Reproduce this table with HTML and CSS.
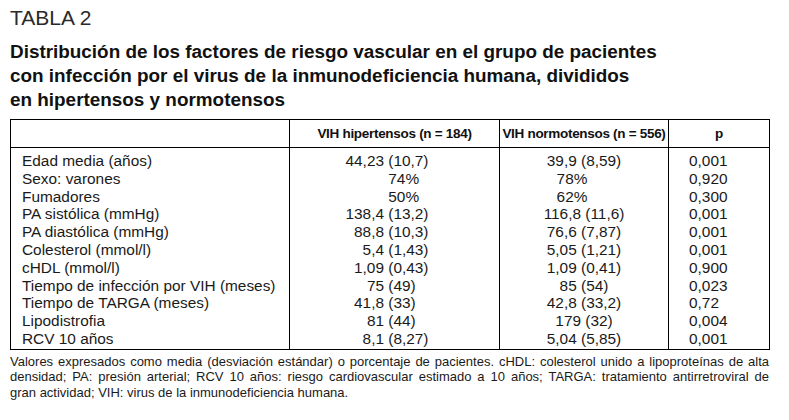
FILE: index.html
```html
<!DOCTYPE html>
<html lang="es">
<head>
<meta charset="utf-8">
<title>Tabla 2</title>
<link rel="stylesheet" href="styles.css">
</head>
<body>
<div class="page">
  <div class="label">TABLA 2</div>
  <h1 class="title">Distribución de los factores de riesgo vascular en el grupo de pacientes<br>con infección por el virus de la inmunodeficiencia humana, divididos<br>en hipertensos y normotensos</h1>
  <table class="data">
    <colgroup>
      <col class="c1"><col class="c2"><col class="c3"><col class="c4">
    </colgroup>
    <thead>
      <tr><th></th><th>VIH hipertensos (n = 184)</th><th>VIH normotensos (n = 556)</th><th>p</th></tr>
    </thead>
    <tbody>
      <tr class="first"><td class="name">Edad media (años)</td><td class="hip"><span class="m">44,23</span> <span class="s">(10,7)</span></td><td class="nor">39,9 (8,59)</td><td class="p">0,001</td></tr>
      <tr><td class="name">Sexo: varones</td><td class="hip"><span class="m"></span> <span class="s">74%</span></td><td class="nor pct">78%</td><td class="p">0,920</td></tr>
      <tr><td class="name">Fumadores</td><td class="hip"><span class="m"></span> <span class="s">50%</span></td><td class="nor pct">62%</td><td class="p">0,300</td></tr>
      <tr><td class="name">PA sistólica (mmHg)</td><td class="hip"><span class="m">138,4</span> <span class="s">(13,2)</span></td><td class="nor">116,8 (11,6)</td><td class="p">0,001</td></tr>
      <tr><td class="name">PA diastólica (mmHg)</td><td class="hip"><span class="m">88,8</span> <span class="s">(10,3)</span></td><td class="nor">76,6 (7,87)</td><td class="p">0,001</td></tr>
      <tr><td class="name">Colesterol (mmol/l)</td><td class="hip"><span class="m">5,4</span> <span class="s">(1,43)</span></td><td class="nor">5,05 (1,21)</td><td class="p">0,001</td></tr>
      <tr><td class="name">cHDL (mmol/l)</td><td class="hip"><span class="m">1,09</span> <span class="s">(0,43)</span></td><td class="nor">1,09 (0,41)</td><td class="p">0,900</td></tr>
      <tr><td class="name">Tiempo de infección por VIH (meses)</td><td class="hip"><span class="m">75</span> <span class="s">(49)</span></td><td class="nor">85 (54)</td><td class="p">0,023</td></tr>
      <tr><td class="name">Tiempo de TARGA (meses)</td><td class="hip"><span class="m">41,8</span> <span class="s">(33)</span></td><td class="nor">42,8 (33,2)</td><td class="p">0,72</td></tr>
      <tr><td class="name">Lipodistrofia</td><td class="hip"><span class="m">81</span> <span class="s">(44)</span></td><td class="nor">179 (32)</td><td class="p">0,004</td></tr>
      <tr class="last"><td class="name">RCV 10 años</td><td class="hip"><span class="m">8,1</span> <span class="s">(8,27)</span></td><td class="nor">5,04 (5,85)</td><td class="p">0,001</td></tr>
    </tbody>
  </table>
  <p class="note">
    <span class="ln">Valores expresados como media (desviación estándar) o porcentaje de pacientes. cHDL: colesterol unido a lipoproteínas de alta</span>
    <span class="ln">densidad; PA: presión arterial; RCV 10 años: riesgo cardiovascular estimado a 10 años; TARGA: tratamiento antirretroviral de</span>
    <span class="ln end">gran actividad; VIH: virus de la inmunodeficiencia humana.</span>
  </p>
</div>
</body>
</html>
```

FILE: styles.css
```css
html, body {
  margin: 0;
  padding: 0;
  background: #fff;
}

body {
  font-family: "Liberation Sans", Arial, sans-serif;
  color: #1a1a1a;
}

.page {
  padding: 5px 0 0 10px;
  width: 760px;
}

.label {
  font-size: 21px;
  line-height: 25px;
  font-weight: normal;
  color: #2a2a2a;
}

.title {
  margin: 10px 0 0 0;
  font-size: 18.9px;
  line-height: 24px;
  font-weight: bold;
  color: #111;
}

.data {
  margin-top: 7px;
  border-collapse: collapse;
  table-layout: fixed;
  width: 759px;
  border: 1px solid #000;
}

.c1 { width: 279px; }
.c2 { width: 210px; }
.c3 { width: 169px; }
.c4 { width: 101px; }

.data th {
  height: 27px;
  padding: 0;
  font-size: 13.5px;
  letter-spacing: -0.3px;
  font-weight: bold;
  text-align: center;
  white-space: nowrap;
  border-bottom: 1px solid #000;
  border-left: 1px solid #000;
  color: #111;
}

.data th:first-child {
  border-left: none;
}

.data td {
  padding: 0;
  font-size: 15.4px;
  line-height: 17.8px;
  white-space: nowrap;
  border-left: 1px solid #000;
  color: #1a1a1a;
}

.data td.name {
  border-left: none;
  padding-left: 11px;
}

.data tr.first td {
  padding-top: 4px;
}

.data tr.last td {
  padding-bottom: 1px;
}

.hip {
  padding-left: 6px;
}

.hip .m {
  display: inline-block;
  width: 94px;
  text-align: right;
}

.nor {
  text-align: center;
}

.data td.pct {
  padding-right: 24px;
}

.data td.p {
  padding-left: 20px;
}

.note {
  margin: 4px 0 0 0;
  width: 759px;
  font-size: 13px;
  line-height: 15.5px;
  color: #1a1a1a;
}

.ln {
  display: block;
  text-align: justify;
  text-align-last: justify;
  white-space: nowrap;
}

.ln.end {
  text-align: left;
  text-align-last: left;
}
```
